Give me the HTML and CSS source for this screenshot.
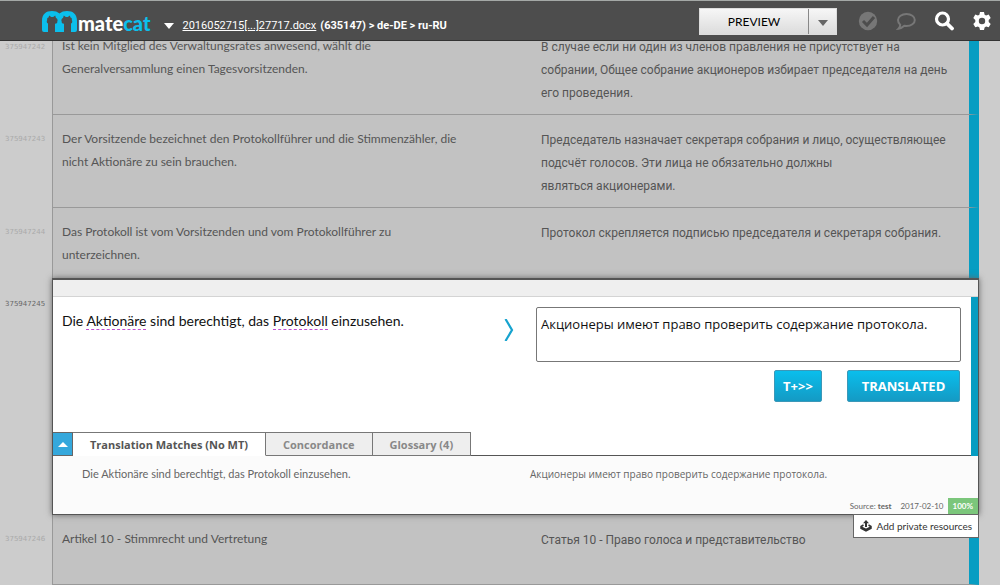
FILE: index.html
```html
<!DOCTYPE html>
<html lang="en">
<head>
<meta charset="utf-8">
<meta name="viewport" content="width=device-width, initial-scale=1">
<title>MateCat</title>
<link rel="stylesheet" href="styles.css">
</head>
<body>
<header class="topbar">
  <a class="logo" href="#" aria-label="matecat">
    <svg class="logo-mark" viewBox="0 0 35 22" aria-hidden="true"><path fill="#0bbfec" d="M0 21V10C0 3 4 0 10 0c3 0 5.500.8 7.500 2.500C19.500.8 22 0 25 0c6 0 10 3 10 10v9q0 2-2 2H2q-2 0-2-2z"/><g fill="#4d4d4d"><path d="M6 22V12.500C4.500 12 4.500 10 5.200 9 4.800 7.500 5.500 6.500 6.500 6.500L7.200 4.500 9.200 6h2l2-1.500.8 2.500c1.500.5 2 2 1.300 3.500.3 1.500-.8 2.200-2.300 2.200V22z"/><path d="M22 22v-9.300c-1.500 0-2.600-.7-2.300-2.200-.7-1.500-.2-3 1.300-3.500l.8-2.500 2 1.500h2l2-1.500.7 2c1 0 1.700 1 1.300 2.500.7 1 .7 3-.8 3.500V22z"/></g></svg>
    <span class="logo-text">mate<span class="logo-cat">cat</span></span>
  </a>
  <nav class="crumbs">
    <svg class="caret" viewBox="0 0 10 6" aria-hidden="true"><path fill="#fff" d="M0 0h10L5 6z"/></svg>
    <a class="file" href="#">2016052715[...]27717.docx</a>
    <span class="job">(635147) &gt; de-DE &gt; ru-RU</span>
  </nav>
  <div class="actions">
    <div class="split">
      <button class="preview" type="button">PREVIEW</button>
      <button class="more" type="button" aria-label="More options"><svg viewBox="0 0 10 6" width="10" height="6"><path fill="#666" d="M0 0h10L5 6z"/></svg></button>
    </div>
    <button class="icon" type="button" aria-label="Quality"><svg viewBox="0 0 20 20"><circle cx="10" cy="10" r="9.200" fill="#777"/><path d="M5 10l4 4 7-8" fill="none" stroke="#4d4d4d" stroke-width="3"/></svg></button>
    <button class="icon" type="button" aria-label="Comments"><svg viewBox="0 0 20 20"><path d="M10.500 3c4.700 0 8.300 2.600 8.300 6s-3.600 6-8.300 6c-.8 0-1.500 0-2.200-.2C6.500 16.500 4.500 17.500 2.500 17.700c1-1 1.700-2.300 1.700-4C2.700 12.500 2 10.800 2 9c0-3.400 3.800-6 8.500-6z" fill="none" stroke="#777" stroke-width="2"/></svg></button>
    <button class="icon" type="button" aria-label="Search"><svg viewBox="0 0 20 20"><circle cx="8.500" cy="8" r="6" fill="none" stroke="#fff" stroke-width="3.200"/><path d="M13 12.500l5 5" stroke="#fff" stroke-width="3.800" stroke-linecap="round"/></svg></button>
    <button class="icon" type="button" aria-label="Settings"><svg viewBox="0 0 20 20"><path fill="#fff" fill-rule="evenodd" d="M8 1h4l.6 2.700 1.500.8 2.600-.9 2 3.400-2 1.900v2l2 2-2 3.400-2.600-.8-1.500.9L12 19H8l-.6-2.600-1.500-.9-2.600.8-2-3.400 2-2v-2l-2-1.900 2-3.400 2.600.9 1.500-.8zM10 6.800a3.200 3.200 0 1 0 0 6.400 3.200 3.200 0 0 0 0-6.400z"/></svg></button>
  </div>
</header>

<main class="editor">
  <section class="segment first">
    <span class="sid">375947242</span>
    <div class="row">
      <p class="source" lang="de">Ist kein Mitglied des Verwaltungsrates anwesend, wählt die<br>Generalversammlung einen Tagesvorsitzenden.</p>
      <p class="target" lang="ru">В случае если ни один из членов правления не присутствует на<br>собрании, Общее собрание акционеров избирает председателя на день<br>его проведения.</p>
    </div>
  </section>
  <section class="segment">
    <span class="sid">375947243</span>
    <div class="row">
      <p class="source" lang="de">Der Vorsitzende bezeichnet den Protokollführer und die Stimmenzähler, die<br>nicht Aktionäre zu sein brauchen.</p>
      <p class="target" lang="ru">Председатель назначает секретаря собрания и лицо, осуществляющее<br>подсчёт голосов. Эти лица не обязательно должны<br>являться акционерами.</p>
    </div>
  </section>
  <section class="segment before-active">
    <span class="sid">375947244</span>
    <div class="row">
      <p class="source" lang="de">Das Protokoll ist vom Vorsitzenden und vom Protokollführer zu<br>unterzeichnen.</p>
      <p class="target" lang="ru">Протокол скрепляется подписью председателя и секретаря собрания.</p>
    </div>
  </section>

  <section class="segment active">
    <span class="sid">375947245</span>
    <div class="panel">
      <div class="strip"></div>
      <div class="work">
        <p class="source" lang="de">Die <span class="term">Aktionäre</span> sind berechtigt, das <span class="term">Protokoll</span> einzusehen.</p>
        <svg class="arrow" viewBox="0 0 10 22" aria-hidden="true"><path d="M1.500 0L8 11 1.500 22" fill="none" stroke="#16a3cf" stroke-width="2.200"/></svg>
        <div class="edit">
          <textarea class="input" lang="ru" spellcheck="false" aria-label="Translation">Акционеры имеют право проверить содержание протокола.</textarea>
          <div class="buttons">
            <button class="blue next" type="button">T+&gt;&gt;</button>
            <button class="blue done" type="button">TRANSLATED</button>
          </div>
        </div>
      </div>
      <div class="tabs">
        <button class="toggle" type="button" aria-label="Collapse"><svg viewBox="0 0 10 5" width="10" height="5"><path fill="#fff" d="M0 5h10L5 0z"/></svg></button>
        <button class="tab current" type="button">Translation Matches (No MT)</button>
        <button class="tab" type="button">Concordance</button>
        <button class="tab" type="button">Glossary (4)</button>
        <span class="rest"></span>
      </div>
      <div class="matches">
        <div class="match">
          <p lang="de">Die Aktionäre sind berechtigt, das Protokoll einzusehen.</p>
          <p lang="ru">Акционеры имеют право проверить содержание протокола.</p>
        </div>
        <div class="meta"><span>Source: <b>test</b></span><span>2017-02-10</span><span class="score">100%</span></div>
      </div>
      <button class="private" type="button"><svg viewBox="0 0 12 12" width="12" height="12"><path fill="#333" d="M6 0l3 3.200H7V7H5V3.200H3z"/><path fill="none" stroke="#333" stroke-width="1.500" d="M3.500 5L1 6.500v1.700l5 2.600 5-2.600V6.500L8.500 5M1 6.800l5 2.600 5-2.600"/></svg>Add private resources</button>
    </div>
  </section>

  <section class="segment last">
    <span class="sid">375947246</span>
    <div class="row">
      <p class="source" lang="de">Artikel 10 - Stimmrecht und Vertretung</p>
      <p class="target" lang="ru">Статья 10 - Право голоса и представительство</p>
    </div>
  </section>
</main>
</body>
</html>
```
FILE: styles.css
```css
* { box-sizing: border-box; }
body { margin: 0; background: #ccc; font-family: Lato, "Open Sans", sans-serif; font-size: 12px; color: #555; overflow-x: hidden; }
p { margin: 0; }
button { font-family: inherit; margin: 0; padding: 0; border: 0; background: none; cursor: pointer; }
[lang="ru"] { font-family: "Open Sans", "Noto Sans", sans-serif; }

.topbar { position: sticky; top: 0; z-index: 5; display: flex; align-items: center; height: 41px; padding: 0 8px 0 42px; background: #4d4d4d; border-top: 1px solid #a4a8a6; border-bottom: 1px solid #333; color: #fff; }
.logo { display: flex; align-items: flex-end; padding-top: 2px; text-decoration: none; color: #fff; }
.logo-mark { width: 35px; height: 22px; }
.logo-text { margin-left: 1px; font: 900 20px/20px Lato, sans-serif; }
.logo-cat { color: #0bbfec; }
.crumbs { display: flex; align-items: center; margin: 11px 0 0 14px; font: 11px/14px Roboto, sans-serif; }
.caret { width: 10px; height: 6px; margin-right: 8px; }
.file { color: #fff; }
.job { margin-left: 4px; font-weight: bold; }
.actions { display: flex; align-items: center; gap: 18px; margin-left: auto; padding-top: 1px; }
.split { display: flex; width: 138px; height: 27px; margin-right: 3px; border: 1px solid #ddd; background: linear-gradient(#f6f6f6, #dcdcdc); }
.preview { flex: 1; font-size: 12px; color: #000; }
.more { width: 28px; border-left: 1px solid #888; }
.icon { width: 20px; height: 20px; }
.icon svg { display: block; width: 20px; height: 20px; }

.segment { display: flex; }
.sid { flex: none; width: 52px; padding: 18px 0 0 5px; font: 7px/12px "DejaVu Sans", sans-serif; color: #aaa; }
.row { flex: 1; display: grid; grid-template-columns: 478fr 438fr; min-height: 93px; margin-right: 21px; padding: 12px 0 9px; background: #c2c2c2; border-left: 1px solid #999; border-right: 10px solid #069dc2; border-bottom: 1px solid #999; line-height: 23px; }
.row .target { font-family: Roboto, sans-serif; }
.source { padding-left: 9px; }
.target { padding: 2px 0 0 10px; }
.first { margin-top: -7px; }
.first .sid { padding-top: 7px; }
.first .row { min-height: 81px; padding: 0; }
.before-active .row { min-height: 70px; border-bottom: 0; }
.last .row { min-height: 70px; }

.active { position: relative; }
.active .sid { padding-top: 20px; color: #666; }
.panel { position: relative; flex: 1; margin-right: 21px; background: #fff; border: 1px solid #555; border-top-width: 2px; box-shadow: 0 0 6px #666; }
.strip { height: 17px; background: #efefef; border-bottom: 1px solid #d4d4d4; }
.work { display: grid; grid-template-columns: 451fr 10px 22px 425fr; min-height: 135px; padding: 10px 10px 0 0; border-right: 7px solid #069dc2; }
.work .source { color: #111; font-size: 14px; line-height: 28px; }
.term { border-bottom: 1px dashed #c050d0; }
.arrow { width: 10px; height: 22px; margin-top: 12px; }
.edit { grid-column: 4; }
.input { display: block; width: 100%; height: 55px; padding: 4px; resize: none; border: 1px solid #777; border-radius: 2px; background: #fff; color: #111; font-size: 13px; line-height: 24px; }
.buttons { display: flex; justify-content: flex-end; gap: 25px; margin-top: 8px; padding-right: 1px; }
.blue { height: 32px; border: 1px solid #3b98b8; border-radius: 2px; background: linear-gradient(#0abeec, #149ac4); color: #fff; font: bold 13px "Open Sans", sans-serif; }
.next { width: 48px; }
.done { width: 113px; }
.tabs { display: flex; height: 24px; border-right: 7px solid #069dc2; }
.toggle { width: 20px; display: grid; place-items: center; background: #35a8dc; border: 1px solid #666; border-left: 0; }
.tab { padding: 0 17px; border: 1px solid #777; border-left: 0; background: #eee; color: #888; font: bold 11px "Open Sans", sans-serif; }
.current { background: #fff; border-bottom-color: #fff; color: #555; }
.rest { flex: 1; border-bottom: 1px solid #555; }
.matches { min-height: 58px; background: #fbfbfb; color: #666; }
.match { display: grid; grid-template-columns: 477fr 448fr; height: 42px; padding-top: 6px; font-size: 11px; line-height: 24px; }
.match p:first-child { padding-left: 29px; }
.match p:last-child { font-size: 10px; }
.meta { display: flex; justify-content: flex-end; gap: 9px; font-size: 8px; line-height: 16px; }
.score { margin-left: -5px; padding: 0 5px; background: #7bc67b; color: #fff; font-weight: bold; }
.private { position: absolute; right: -1px; top: 100%; z-index: 2; display: flex; align-items: center; gap: 5px; height: 24px; padding: 0 6px; background: #fff; border: 1px solid #666; color: #333; font-size: 10px; white-space: nowrap; }
```
